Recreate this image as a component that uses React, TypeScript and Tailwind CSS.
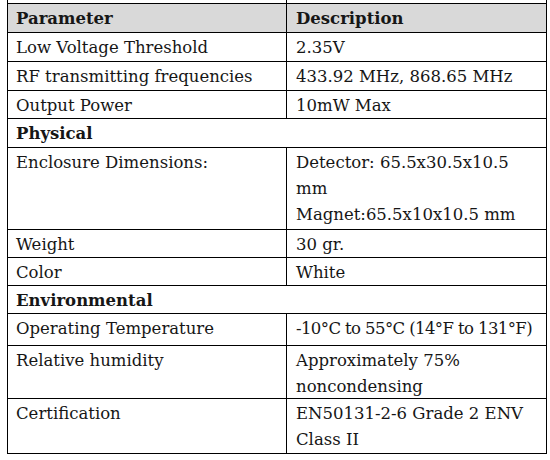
import React from "react";

type Row =
  | { kind: "pair"; left: React.ReactNode; right: React.ReactNode; h: string; header?: boolean; tight?: boolean }
  | { kind: "section"; label: string; h: string };

const rows: Row[] = [
  { kind: "pair", left: "Parameter", right: "Description", h: "h-[29px]", header: true },
  { kind: "pair", left: "Low Voltage Threshold", right: "2.35V", h: "h-[29px]" },
  { kind: "pair", left: "RF transmitting frequencies", right: "433.92 MHz, 868.65 MHz", h: "h-[29px]" },
  { kind: "pair", left: "Output Power", right: "10mW Max", h: "h-[28px]" },
  { kind: "section", label: "Physical", h: "h-[29px]" },
  {
    kind: "pair",
    left: "Enclosure Dimensions:",
    right: (
      <>
        Detector: 65.5x30.5x10.5
        <br />
        mm
        <br />
        Magnet:65.5x10x10.5 mm
      </>
    ),
    h: "h-[82px]",
  },
  { kind: "pair", left: "Weight", right: "30 gr.", h: "h-[28px]" },
  { kind: "pair", left: "Color", right: "White", h: "h-[28px]" },
  { kind: "section", label: "Environmental", h: "h-[28px]" },
  {
    kind: "pair",
    left: "Operating Temperature",
    right: "-10°C to 55°C (14°F to 131°F)",
    h: "h-[32px]",
    tight: true,
  },
  {
    kind: "pair",
    left: "Relative humidity",
    right: (
      <>
        Approximately 75%
        <br />
        noncondensing
      </>
    ),
    h: "h-[53px]",
  },
  {
    kind: "pair",
    left: "Certification",
    right: (
      <>
        EN50131-2-6 Grade 2 ENV
        <br />
        Class II
      </>
    ),
    h: "h-[55px]",
  },
];

export default function App() {
  return (
    <div
      className="w-[550px] h-[460px] bg-white text-[#161616] text-[16.5px] leading-[26px]"
      style={{ fontFamily: '"DejaVu Serif", "Liberation Serif", serif' }}
    >
      <div className="ml-[7px] w-[540px] flex flex-col">
        <div className="flex h-[4px] border-l border-r border-b border-black">
          <div className="w-[279px] border-r border-black" />
          <div className="flex-1" />
        </div>
        {rows.map((r, i) =>
          r.kind === "section" ? (
            <div key={i} className={`flex ${r.h} border-l border-r border-b border-black`}>
              <div className="flex-1 pl-[8px] pt-[2px] font-bold">{r.label}</div>
            </div>
          ) : (
            <div
              key={i}
              className={`flex ${r.h} border-l border-r border-b border-black ${r.header ? "bg-[#d9d9d9] font-bold" : ""}`}
            >
              <div className="w-[279px] shrink-0 border-r border-black pl-[8px] pt-[2px] whitespace-nowrap">
                {r.left}
              </div>
              <div
                className={`flex-1 pl-[9px] pt-[2px] whitespace-nowrap ${r.tight ? "tracking-[-0.6px]" : ""}`}
              >
                {r.right}
              </div>
            </div>
          )
        )}
      </div>
    </div>
  );
}
